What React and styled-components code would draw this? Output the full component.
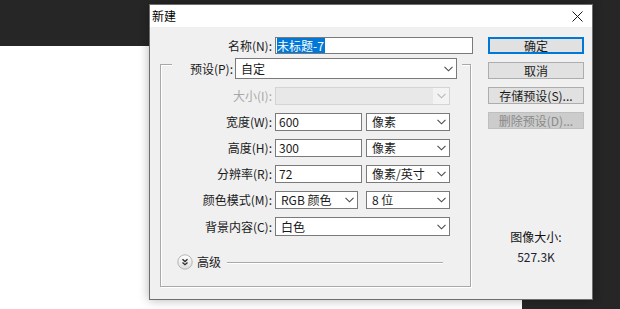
import styled, { createGlobalStyle } from 'styled-components'

const GlobalStyle = createGlobalStyle`
body {
    margin: 0;
    background: #262626;
    font-family: "Noto Sans CJK SC", "Noto Sans", sans-serif;
    font-size: 12px;
    color: #1a1a1a;
}
`

const Chevron = ({ color = '#4a4a4a' }) => (
    <svg width="9" height="6" viewBox="0 0 9 6">
        <polyline points="0.5,0.8 4.5,4.8 8.5,0.8" fill="none" stroke={color} strokeWidth="1.1" />
    </svg>
)

const CloseIcon = () => (
    <svg width="11" height="11" viewBox="0 0 11 11">
        <path d="M0.5 0.5 L10.5 10.5 M10.5 0.5 L0.5 10.5" stroke="#1a1a1a" strokeWidth="1" />
    </svg>
)

const ExpandIcon = () => (
    <svg width="16" height="16" viewBox="0 0 16 16">
        <defs>
            <linearGradient id="expg" x1="0" y1="0" x2="0" y2="1">
                <stop offset="0" stopColor="#ffffff" />
                <stop offset="1" stopColor="#dcdcdc" />
            </linearGradient>
        </defs>
        <circle cx="8" cy="8" r="7.2" fill="url(#expg)" stroke="#b4b4b4" strokeWidth="1" />
        <polyline points="5.5,5.3 8,7.6 10.5,5.3" fill="none" stroke="#2a2a2a" strokeWidth="1.3" />
        <polyline points="5.5,8.4 8,10.7 10.5,8.4" fill="none" stroke="#2a2a2a" strokeWidth="1.3" />
    </svg>
)

const Select = ({ width, height = 18, children, disabled }) => (
    <SelectBox $width={width} $height={height} $disabled={disabled}>
        <span>{children}</span>
        <ArrowArea $disabled={disabled}>
            <Chevron color={disabled ? '#b8b8b8' : '#4a4a4a'} />
        </ArrowArea>
    </SelectBox>
)

const App = () => {
    return (
        <Workspace>
            <GlobalStyle />
            <Canvas />
            <Dialog>
                <TitleBar>
                    <Title>新建</Title>
                    <CloseButton><CloseIcon /></CloseButton>
                </TitleBar>
                <Body>
                    <Main>
                        <NameRow>
                            <Label $width={122}>名称(N):</Label>
                            <TextBox $width={198} $height={17}>
                                <Selected>未标题-7</Selected>
                            </TextBox>
                        </NameRow>
                        <Group>
                            <Legend>
                                <Label $width={61}>预设(P):</Label>
                                <Select width={222} height={21}>自定</Select>
                            </Legend>
                            <Rows>
                                <Row>
                                    <Label $width={111} $disabled>大小(I):</Label>
                                    <Select width={175} disabled />
                                </Row>
                                <Row>
                                    <Label $width={111}>宽度(W):</Label>
                                    <TextBox $width={87}>600</TextBox>
                                    <Select width={84}>像素</Select>
                                </Row>
                                <Row>
                                    <Label $width={111}>高度(H):</Label>
                                    <TextBox $width={87}>300</TextBox>
                                    <Select width={84}>像素</Select>
                                </Row>
                                <Row>
                                    <Label $width={111}>分辨率(R):</Label>
                                    <TextBox $width={87}>72</TextBox>
                                    <Select width={84}>像素/英寸</Select>
                                </Row>
                                <Row $gap={8}>
                                    <Label $width={111}>颜色模式(M):</Label>
                                    <Select width={83}>RGB 颜色</Select>
                                    <Select width={84}>8 位</Select>
                                </Row>
                                <Row>
                                    <Label $width={111}>背景内容(C):</Label>
                                    <Select width={175} height={19}>白色</Select>
                                </Row>
                            </Rows>
                            <Advanced>
                                <ExpandIcon />
                                <span>高级</span>
                                <Rule />
                            </Advanced>
                        </Group>
                    </Main>
                    <Side>
                        <Button $primary>确定</Button>
                        <Button>取消</Button>
                        <Button>存储预设(S)...</Button>
                        <Button disabled>删除预设(D)...</Button>
                        <SizeInfo>
                            <div>图像大小:</div>
                            <SizeValue>527.3K</SizeValue>
                        </SizeInfo>
                    </Side>
                </Body>
            </Dialog>
        </Workspace>
    )
}

const Workspace = styled.div`
position: relative;
width: 620px;
height: 309px;
overflow: hidden;
background: #262626;
`

const Canvas = styled.div`
margin-top: 46px;
width: 522px;
height: 263px;
background: #ffffff;
`

const Dialog = styled.div`
position: absolute;
left: 149px;
top: 4px;
width: 442px;
height: 294px;
border: 1px solid #6e6e6e;
background: #f0f0f0;
box-shadow: 0 0 10px rgba(0, 0, 0, 0.3);
display: flex;
flex-direction: column;
`

const TitleBar = styled.div`
height: 22px;
background: #ffffff;
display: flex;
align-items: center;
justify-content: space-between;
padding-left: 2px;
padding-right: 8px;
`

const Title = styled.span`
font-size: 12px;
line-height: 16px;
color: #000;
`

const CloseButton = styled.div`
display: flex;
align-items: center;
justify-content: center;
width: 14px;
height: 14px;
`

const Body = styled.div`
flex: 1;
display: flex;
padding: 10px 9px 0 0;
`

const Main = styled.div`
width: 323px;
display: flex;
flex-direction: column;
`

const NameRow = styled.div`
display: flex;
align-items: center;
gap: 3px;
`

const Label = styled.span`
width: ${p => p.$width}px;
text-align: right;
line-height: 16px;
white-space: nowrap;
color: ${p => p.$disabled ? '#a8a8a8' : '#1a1a1a'};
`

const TextBox = styled.div`
box-sizing: border-box;
width: ${p => p.$width}px;
height: ${p => p.$height || 18}px;
border: 1px solid #7a7a7a;
background: #ffffff;
padding-left: 3px;
display: flex;
align-items: center;
line-height: 16px;
`

const Selected = styled.span`
margin-left: -2px;
background: #0078d7;
color: #ffffff;
line-height: 15px;
padding-right: 1px;
`

const SelectBox = styled.div`
box-sizing: border-box;
width: ${p => p.$width}px;
height: ${p => p.$height}px;
border: 1px solid ${p => p.$disabled ? '#d4d4d4' : '#7a7a7a'};
background: ${p => p.$disabled ? '#e8e8e8' : '#ffffff'};
padding-left: 5px;
display: flex;
align-items: center;
justify-content: space-between;
line-height: 16px;
white-space: nowrap;
`

const ArrowArea = styled.div`
align-self: stretch;
width: 16px;
display: flex;
align-items: center;
justify-content: center;
background: ${p => p.$disabled ? '#f3f3f3' : 'transparent'};
`

const Group = styled.div`
box-sizing: border-box;
margin: 10px 0 0 10px;
width: 311px;
height: 223px;
border: 1px solid #a8a8a8;
box-shadow: inset 1px 1px 0 #ffffff, 1px 1px 0 #ffffff;
display: flex;
flex-direction: column;
`

const Legend = styled.div`
margin: -7px 0 0 11px;
width: 290px;
padding-right: 5px;
box-sizing: border-box;
background: #f0f0f0;
display: flex;
align-items: center;
gap: 2px;
`

const Rows = styled.div`
margin-top: 8px;
display: flex;
flex-direction: column;
gap: 8px;
`

const Row = styled.div`
display: flex;
align-items: center;
gap: ${p => p.$gap || 4}px;
& > span:first-child {
    margin-right: ${p => 3 - (p.$gap || 4)}px;
}
`

const Advanced = styled.div`
margin: 18px 27px 0 16px;
display: flex;
align-items: center;
gap: 4px;
line-height: 16px;
`

const Rule = styled.div`
flex: 1;
margin-left: 2px;
height: 1px;
background: #a8a8a8;
box-shadow: 0 1px 0 #ffffff;
`

const Side = styled.div`
margin-left: 15px;
width: 96px;
display: flex;
flex-direction: column;
gap: 8px;
`

const Button = styled.button`
box-sizing: border-box;
width: 96px;
height: 17px;
padding: 0;
font-family: inherit;
font-size: 12px;
line-height: 14px;
border: ${p => p.$primary ? '2px solid #0078d7' : '1px solid #adadad'};
background: ${p => p.disabled ? '#cccccc' : '#e1e1e1'};
border-color: ${p => p.disabled ? '#bfbfbf' : p.$primary ? '#0078d7' : '#adadad'};
color: ${p => p.disabled ? '#8a8a8a' : '#1a1a1a'};
`

const SizeInfo = styled.div`
margin-top: 93px;
display: flex;
flex-direction: column;
align-items: center;
gap: 6px;
line-height: 14px;
color: #111;
`

const SizeValue = styled.div`
color: #1c2330;
`

export default App
